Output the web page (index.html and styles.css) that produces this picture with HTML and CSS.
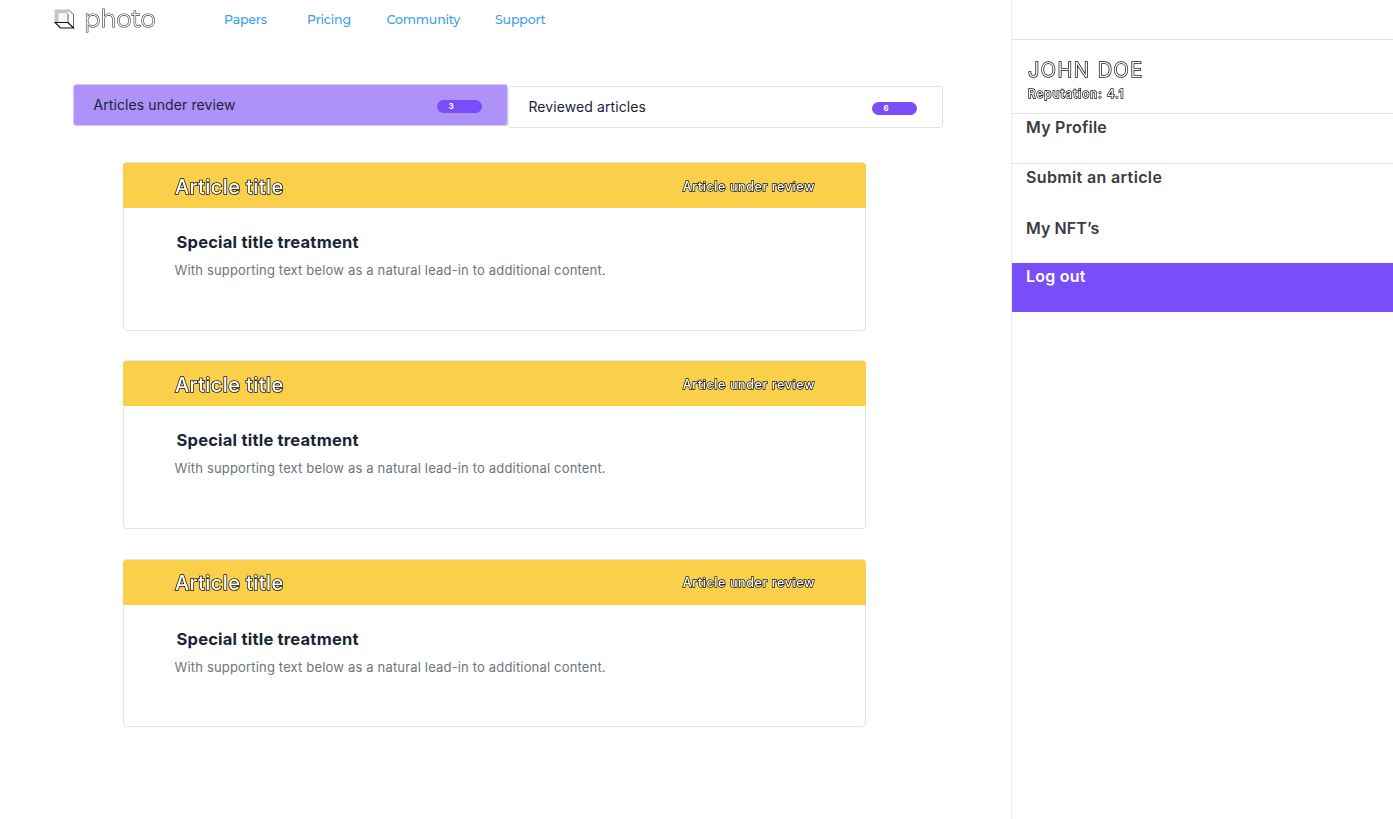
FILE: index.html
```html
<!DOCTYPE html>
<html lang="en">
<head>
<meta charset="utf-8">
<title>Articles</title>
<link rel="stylesheet" href="styles.css">
</head>
<body>
<div class="page">
  <div class="content">
    <header class="header">
      <a class="brand">
        <svg class="mark" width="21" height="21" viewBox="0 0 21 21">
          <path d="M.5 .5h13.500v4h-9v8.500h-4.500z" fill="#c6c6c6"/>
          <path d="M4.500 4.500h9v9h-9z" fill="#fafafa"/>
          <path d="M14 .5l5.500 5v13.500l-5.500-5.500z" fill="#fff"/>
          <path d="M14 .5l5.500 5v13.500M14 4.500v9" fill="none" stroke="#555" stroke-width=".9"/>
          <path d="M1 13.500h13l5.500 5.500h-13z" fill="#fff" stroke="#111" stroke-width="1.200"/>
        </svg>
        <span class="wordmark">photo</span>
      </a>
      <nav class="nav">
        <a class="n-papers">Papers</a><a class="n-pricing">Pricing</a><a class="n-community">Community</a><a class="n-support">Support</a>
      </nav>
    </header>
    <div class="tabs">
      <div class="tab active"><span class="tab-review">Articles under review</span><span class="badge">3</span></div>
      <div class="tab"><span class="tab-done">Reviewed articles</span><span class="badge">6</span></div>
    </div>
    <main class="cards">
      <article class="card">
        <div class="card-head"><h2>Article title</h2><span class="status">Article under review</span></div>
        <div class="card-body"><h3>Special title treatment</h3><p>With supporting text below as a natural lead-in to additional content.</p></div>
      </article>
      <article class="card">
        <div class="card-head"><h2>Article title</h2><span class="status">Article under review</span></div>
        <div class="card-body"><h3>Special title treatment</h3><p>With supporting text below as a natural lead-in to additional content.</p></div>
      </article>
      <article class="card">
        <div class="card-head"><h2>Article title</h2><span class="status">Article under review</span></div>
        <div class="card-body"><h3>Special title treatment</h3><p>With supporting text below as a natural lead-in to additional content.</p></div>
      </article>
    </main>
  </div>
  <aside class="sidebar">
    <div class="user"><div class="name">JOHN DOE</div><div class="rep">Reputation: 4.1</div></div>
    <a class="item profile">My Profile</a>
    <a class="item submit">Submit an article</a>
    <a class="item nfts">My NFT’s</a>
    <a class="item logout">Log out</a>
  </aside>
</div>
</body>
</html>
```
FILE: styles.css
```css
* { box-sizing: border-box; }
body { margin: 0; background: #fff; font-family: Inter, sans-serif; color: #192434; }
h2, h3, p { margin: 0; }
.page { display: flex; height: 819px; overflow: hidden; white-space: nowrap; }
.content { width: 1011px; flex: none; }

.header { display: flex; height: 40px; }
.brand { display: flex; width: 224px; padding: 9px 0 0 54px; }
.mark { flex: none; }
.wordmark {
  margin: -6px 0 0 9px;
  font: 300 24px/32px Montserrat, Lato, sans-serif;
  letter-spacing: .1px;
  color: #fff;
  -webkit-text-stroke: 1.2px #333;
  paint-order: stroke fill;
}
.wordmark, .card-head h2, .status, .name, .rep { will-change: opacity; }
.nav { display: flex; font: 500 12.5px/40px Montserrat, Inter, sans-serif; letter-spacing: -.16px; color: #3a9ff0; }
.n-papers { width: 83px; }
.n-pricing { width: 79.500px; }
.n-community { width: 108.500px; }

.tabs { display: flex; padding: 44px 0 0 73.400px; height: 122px; }
.tab {
  display: flex; justify-content: space-between; align-items: flex-start;
  width: 435px; height: 41.500px; margin-top: 2px; padding: 0 25px 0 19px;
  border: 1px solid #e3e5e9; border-radius: 3px;
  font-size: 14px; line-height: 40px; letter-spacing: .1px;
}
.tab.active { margin-top: 0; background: #ae92f9; border-color: #d3c9f2; }
.badge {
  width: 45px; height: 13px; margin-top: 15px; padding-left: 11px;
  border-radius: 7px; background: #794dfa; color: #fff;
  font-size: 8px; font-weight: 700; line-height: 13px;
}

.cards { display: flex; flex-direction: column; gap: 29.900px; width: 743px; margin-left: 123px; }
.card { height: 168.500px; border: 1px solid #e2e4e8; border-radius: 4px; }
.card-head {
  display: flex; justify-content: space-between; align-items: center;
  height: 45px; margin: 0 -1px; padding: 2px 51px 0 52px;
  background: #fad04b; border-radius: 3px 3px 0 0;
}
.card-head h2, .status, .name, .rep {
  color: #fff; -webkit-text-stroke: 1.5px #111; paint-order: stroke fill;
}
.card-head h2 { font-size: 20px; font-weight: 500; line-height: 24px; letter-spacing: .42px; }
.status { font-size: 12.5px; font-weight: 500; line-height: 16px; letter-spacing: .6px; }
.card-body { padding: 22px 0 0 50.500px; }
.card-body h3 { padding-left: 2px; font-size: 16.5px; font-weight: 700; line-height: 24px; letter-spacing: .22px; }
.card-body p { margin-top: 6px; font-size: 13px; line-height: 20px; letter-spacing: .17px; color: #6c757d; }

.sidebar { flex: 1; padding-top: 39px; border-left: 1px solid #ececec; }
.user { height: 74px; padding: 18px 0 0 16px; border-top: 1px solid #e2e2e2; }
.name { font-size: 20px; font-weight: 300; line-height: 24px; letter-spacing: 1.5px; }
.rep { margin-top: 4px; font-size: 11.5px; font-weight: 500; line-height: 16px; letter-spacing: 1.1px; }
.rep, .status { -webkit-text-stroke-width: 1.4px; }
.item { display: block; height: 50px; padding-left: 14px; font-size: 16px; font-weight: 600; line-height: 27px; letter-spacing: .25px; color: #383c43; }
.profile, .submit { border-top: 1px solid #e2e2e2; }
.submit { letter-spacing: .36px; }
.nfts { padding-top: 2px; letter-spacing: .08px; }
.logout { height: 49px; background: #794dfa; color: #fff; }
```
